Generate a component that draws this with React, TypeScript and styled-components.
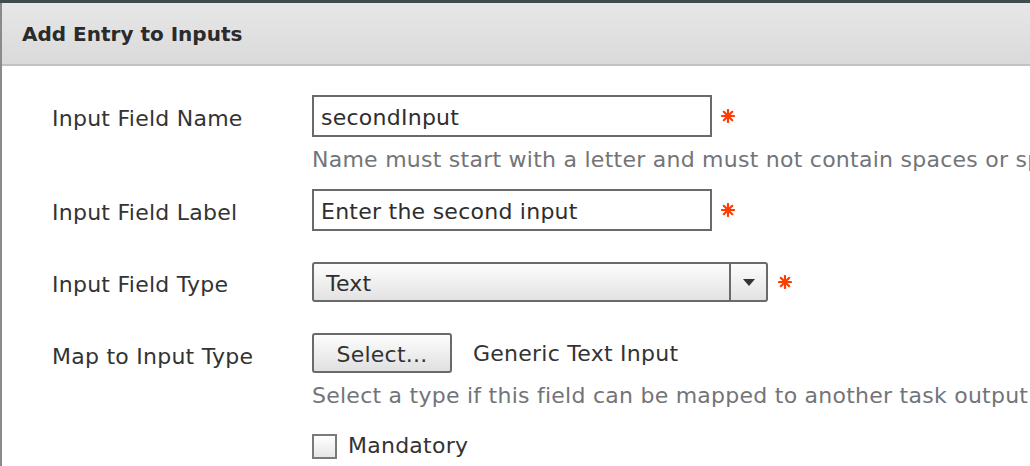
import React from "react";
import styled, { createGlobalStyle } from "styled-components";

const Global = createGlobalStyle`
  html, body { margin: 0; padding: 0; }
  body {
    width: 1030px;
    height: 466px;
    overflow: hidden;
    background: #3e4d4d;
    font-family: "DejaVu Sans", Verdana, sans-serif;
  }
  #root { height: 100%; }
`;

const Dialog = styled.div`
  margin-top: 3px;
  height: 463px;
  background: #ffffff;
  border-left: 2px solid #8a8a8a;
  display: flex;
  flex-direction: column;
  overflow: hidden;
`;

const Header = styled.div`
  height: 61px;
  flex: none;
  background: linear-gradient(#e7e7e7, #dadada);
  border-bottom: 2px solid #c2c2c2;
  display: flex;
  align-items: center;
  padding-left: 20px;
`;

const Title = styled.h1`
  margin: 0;
  font-size: 20px;
  font-weight: bold;
  color: #2b2b2b;
`;

const Form = styled.div`
  display: grid;
  grid-template-columns: 260px 1fr;
  padding: 29px 0 0 50px;
  font-size: 22px;
  letter-spacing: 0.25px;
  line-height: 26px;
`;

const Label = styled.div<{ $top: number }>`
  color: #333333;
  padding-top: ${(p) => p.$top}px;
  white-space: nowrap;
`;

const Field = styled.div<{ $pb: number }>`
  display: flex;
  flex-direction: column;
  padding-bottom: ${(p) => p.$pb}px;
  white-space: nowrap;
  overflow: hidden;
`;

const Line = styled.div`
  display: flex;
  align-items: center;
`;

const TextBox = styled.div`
  box-sizing: border-box;
  width: 400px;
  height: 42px;
  border: 2px solid #6a6a6a;
  background: #fff;
  display: flex;
  align-items: center;
  padding: 3px 0 0 7px;
  color: #2e2e2e;
`;

const Hint = styled.div<{ $mt: number }>`
  color: #737478;
  margin-top: ${(p) => p.$mt}px;
`;

const SelectBox = styled.div`
  box-sizing: border-box;
  width: 456px;
  height: 40px;
  border: 2px solid #6a6a6a;
  border-radius: 3px;
  background: linear-gradient(#fdfdfd, #e2e2e2);
  display: flex;
  align-items: stretch;
  color: #2e2e2e;
`;

const SelectValue = styled.div`
  flex: 1;
  display: flex;
  align-items: center;
  padding: 3px 0 0 12px;
`;

const SelectArrow = styled.div`
  width: 35px;
  border-left: 2px solid #6a6a6a;
  display: flex;
  align-items: center;
  justify-content: center;
`;

const Button = styled.div`
  box-sizing: border-box;
  width: 140px;
  height: 40px;
  border: 2px solid #6a6a6a;
  border-radius: 3px;
  background: linear-gradient(#fdfdfd, #e0e0e0);
  display: flex;
  align-items: center;
  justify-content: center;
  padding-top: 3px;
  color: #333;
`;

const ValueText = styled.span`
  color: #333;
  margin-left: 21px;
  padding-top: 2px;
`;

const CheckRow = styled.label`
  display: flex;
  align-items: center;
  margin-top: 24px;
  color: #333;
`;

const CheckBox = styled.span`
  box-sizing: border-box;
  width: 25px;
  height: 25px;
  border: 2px solid #7a7a7a;
  background: linear-gradient(#ffffff, #e6e6e6);
  margin-right: 11px;
`;

const Req = styled.span<{ $ml: number }>`
  display: inline-flex;
  margin-left: ${(p) => p.$ml}px;
`;

const Asterisk = ({ ml }: { ml: number }) => (
  <Req $ml={ml}>
    <svg width="14" height="14" viewBox="0 0 14 14">
      <g stroke="#ff3c00" strokeWidth="2.2" strokeLinecap="round">
        <line x1="7" y1="1" x2="7" y2="13" />
        <line x1="1" y1="7" x2="13" y2="7" />
        <line x1="2.8" y1="2.8" x2="11.2" y2="11.2" />
        <line x1="11.2" y1="2.8" x2="2.8" y2="11.2" />
      </g>
      <circle cx="7" cy="7" r="2.6" fill="#ff3c00" />
    </svg>
  </Req>
);

export default function App() {
  return (
    <>
      <Global />
      <Dialog>
        <Header>
          <Title>Add Entry to Inputs</Title>
        </Header>
        <Form>
          <Label $top={11}>Input Field Name</Label>
          <Field $pb={16}>
            <Line>
              <TextBox>secondInput</TextBox>
              <Asterisk ml={9} />
            </Line>
            <Hint $mt={10}>Name must start with a letter and must not contain spaces or special characters</Hint>
          </Field>

          <Label $top={11}>Input Field Label</Label>
          <Field $pb={31}>
            <Line>
              <TextBox>Enter the second input</TextBox>
              <Asterisk ml={9} />
            </Line>
          </Field>

          <Label $top={10}>Input Field Type</Label>
          <Field $pb={31}>
            <Line>
              <SelectBox>
                <SelectValue>Text</SelectValue>
                <SelectArrow>
                  <svg width="12" height="7" viewBox="0 0 12 7">
                    <path d="M0 0 H12 L6 7 Z" fill="#333" />
                  </svg>
                </SelectArrow>
              </SelectBox>
              <Asterisk ml={10} />
            </Line>
          </Field>

          <Label $top={11}>Map to Input Type</Label>
          <Field $pb={0}>
            <Line>
              <Button>Select...</Button>
              <ValueText>Generic Text Input</ValueText>
            </Line>
            <Hint $mt={10}>Select a type if this field can be mapped to another task output</Hint>
            <CheckRow>
              <CheckBox />
              Mandatory
            </CheckRow>
          </Field>
        </Form>
      </Dialog>
    </>
  );
}
